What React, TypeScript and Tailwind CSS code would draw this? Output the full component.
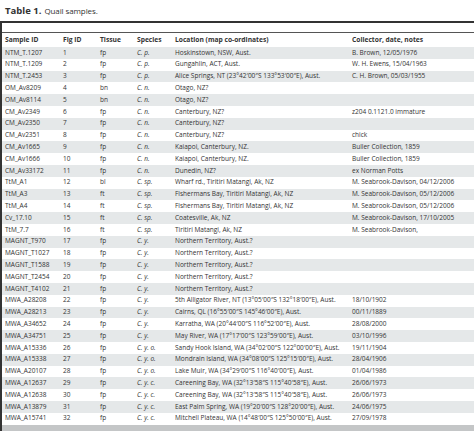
type Row = [string, string, string, string, string, string]

const rows: Row[] = [
  ['NTM_T.1207', '1', 'fp', 'C. p.', 'Hoskinstown, NSW, Aust.', 'B. Brown, 12/05/1976'],
  ['NTM_T.1209', '2', 'fp', 'C. p.', 'Gungahlin, ACT, Aust.', 'W. H. Ewens, 15/04/1963'],
  ['NTM_T.2453', '3', 'fp', 'C. p.', 'Alice Springs, NT (23°42′00″S 133°53′00″E), Aust.', 'C. H. Brown, 05/03/1955'],
  ['OM_Av8209', '4', 'bn', 'C. n.', 'Otago, NZ?', ''],
  ['OM_Av8114', '5', 'bn', 'C. n.', 'Otago, NZ?', ''],
  ['CM_Av2349', '6', 'fp', 'C. n.', 'Canterbury, NZ?', 'z204 0.1121.0 immature'],
  ['CM_Av2350', '7', 'fp', 'C. n.', 'Canterbury, NZ?', ''],
  ['CM_Av2351', '8', 'fp', 'C. n.', 'Canterbury, NZ?', 'chick'],
  ['CM_Av1665', '9', 'fp', 'C. n.', 'Kaiapoi, Canterbury, NZ.', 'Buller Collection, 1859'],
  ['CM_Av1666', '10', 'fp', 'C. n.', 'Kaiapoi, Canterbury, NZ.', 'Buller Collection, 1859'],
  ['CM_Av33172', '11', 'fp', 'C. n.', 'Dunedin, NZ?', 'ex Norman Potts'],
  ['TtM_A1', '12', 'bl', 'C. sp.', 'Wharf rd., Tiritiri Matangi, Ak, NZ', 'M. Seabrook-Davison, 04/12/2006'],
  ['TtM_A3', '13', 'ft', 'C. sp.', 'Fishermans Bay, Tiritiri Matangi, Ak, NZ', 'M. Seabrook-Davison, 05/12/2006'],
  ['TtM_A4', '14', 'ft', 'C. sp.', 'Fishermans Bay, Tiritiri Matangi, Ak, NZ', 'M. Seabrook-Davison, 05/12/2006'],
  ['Cv_17.10', '15', 'ft', 'C. sp.', 'Coatesville, Ak, NZ', 'M. Seabrook-Davison, 17/10/2005'],
  ['TtM_7.7', '16', 'ft', 'C. sp.', 'Tiritiri Matangi, Ak, NZ', 'M. Seabrook-Davison,'],
  ['MAGNT_T970', '17', 'fp', 'C. y.', 'Northern Territory, Aust.?', ''],
  ['MAGNT_T1027', '18', 'fp', 'C. y.', 'Northern Territory, Aust.?', ''],
  ['MAGNT_T1588', '19', 'fp', 'C. y.', 'Northern Territory, Aust.?', ''],
  ['MAGNT_T2454', '20', 'fp', 'C. y.', 'Northern Territory, Aust.?', ''],
  ['MAGNT_T4102', '21', 'fp', 'C. y.', 'Northern Territory, Aust.?', ''],
  ['MWA_A28208', '22', 'fp', 'C. y.', '5th Alligator River, NT (13°05′00″S 132°18′00″E), Aust.', '18/10/1902'],
  ['MWA_A28213', '23', 'fp', 'C. y.', 'Cairns, QL (16°55′00″S 145°46′00″E), Aust.', '00/11/1889'],
  ['MWA_A34652', '24', 'fp', 'C. y.', 'Karratha, WA (20°44′00″S 116°52′00″E), Aust.', '28/08/2000'],
  ['MWA_A34751', '25', 'fp', 'C. y.', 'May River, WA (17°17′00″S 123°59′00″E), Aust.', '03/10/1996'],
  ['MWA_A15336', '26', 'fp', 'C. y. o.', 'Sandy Hook Island, WA (34°02′00″S 122°00′00″E), Aust.', '19/11/1904'],
  ['MWA_A15338', '27', 'fp', 'C. y. o.', 'Mondrain Island, WA (34°08′00″S 125°15′00″E), Aust.', '28/04/1906'],
  ['MWA_A20107', '28', 'fp', 'C. y. o.', 'Lake Muir, WA (34°29′00″S 116°40′00″E), Aust.', '01/04/1986'],
  ['MWA_A12637', '29', 'fp', 'C. y. c.', 'Careening Bay, WA (32°13′58″S 115°40′58″E), Aust.', '26/06/1973'],
  ['MWA_A12638', '30', 'fp', 'C. y. c.', 'Careening Bay, WA (32°13′58″S 115°40′58″E), Aust.', '26/06/1973'],
  ['MWA_A13879', '31', 'fp', 'C. y. c.', 'East Palm Spring, WA (19°20′00″S 128°20′00″E), Aust.', '24/06/1975'],
  ['MWA_A15741', '32', 'fp', 'C. y. c.', 'Mitchell Plateau, WA (14°48′00″S 125°50′00″E), Aust.', '27/09/1978'],
]

const cols = 'grid grid-cols-[58px_37px_37px_38px_177px_1fr] items-center'

export default function App() {
  return (
    <div className="h-[432px] w-[474px] overflow-hidden bg-white font-['Open_Sans',sans-serif] text-[#333]">
      {/* ── Caption ─────────────────────────────────────────────── */}
      <div className="flex h-[21px] items-center pl-[5px] leading-none">
        <span className="text-[9.5px] font-bold">Table 1.</span>
        <span className="ml-[3px] text-[8px] tracking-[-0.1px]">Quail samples.</span>
      </div>

      {/* ── Table ───────────────────────────────────────────────── */}
      <div className="border-l-2 border-[#333]">
        <div className="h-[11px] border-t-2 border-[#333]" />
        <div className={`${cols} h-[15px] border-t border-[#555] pl-[3px] text-[6.7px] font-bold leading-none`}>
          <span>Sample ID</span>
          <span>Fig ID</span>
          <span>Tissue</span>
          <span>Species</span>
          <span>Location (map co-ordinates)</span>
          <span>Collector, date, notes</span>
        </div>
        {rows.map((r, i) => (
          <div
            key={r[0]}
            className={`${cols} h-[11.8px] pl-[3px] text-[6.5px] leading-none whitespace-nowrap ${
              i % 2 === 0 ? 'bg-[#e5e8e9]' : 'bg-white'
            }`}
          >
            <span>{r[0]}</span>
            <span>{r[1]}</span>
            <span>{r[2]}</span>
            <span className="italic">{r[3]}</span>
            <span>{r[4]}</span>
            <span>{r[5]}</span>
          </div>
        ))}
        <div className="h-[6px] bg-[#c4c6c7]" />
      </div>
    </div>
  )
}
